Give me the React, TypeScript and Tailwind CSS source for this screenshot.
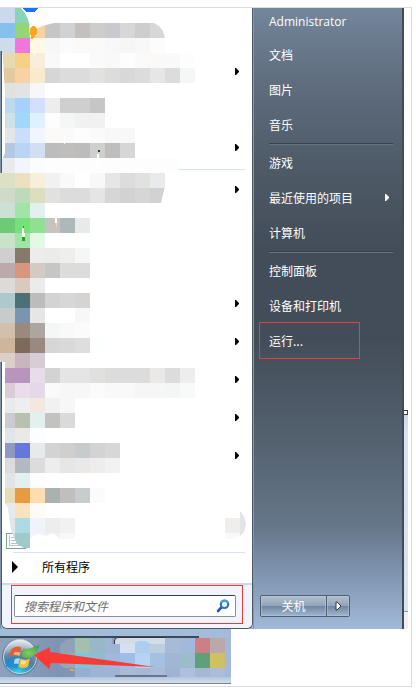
import type { ReactNode } from 'react';

const CELL = 15;

// One string per mosaic row, one colour per cell. "-" leaves a cell empty.
const MENU_MOSAIC = [
  '#ccd9ec #88d4ba',
  '#86c1ed #94d676 #f9d2a3 #c6c6c6 #d1d2d4 #c3c0be #cdcdcb #cac9ce #d7d7d7 #cdcdcb #d7d7d7',
  '#cfdaea #f076d7 #fff8e4 #f7f7f7 #fafbfb #fcfaf8 #fafafa #f8f8f8 #f4f7f6 #f8f8f8 #fcfcfc',
  '#e7d9b0 #f6d084 #f7efdc #f9f9f9 - - #fafafa #f9f9f9 #fdfdfd #fafaf9 #fbf9f7 #f9f9f9 #fdfdfd',
  '#e3cba1 #f8d2a3 #f9eacb #d6d6d6 #dcdcdc #dcdcdc #e1e1df #dcdcdc #d8d8d8 #dcdcdc #e6e6e6 #dcdcdc #f4f7f6',
  '#e1e1df #e2e3e5 #f7f7f7',
  '#bcd9ee #a5d0ff #d2dffe #ededed #cfcfcf #cfcfcf #c6c6c6',
  '#d0e1e6 #9fd7fd #dff1ff #fdfdfd #f4f7f6 #f1f1f1 #f1f1f1',
  '#e3e5e7 #c9defa #f1f5fd #fcfaf8 #fafafa #fdfdfd #fafafa #f8f8f8 #f8f8f8',
  '#b4c8e3 #b9d4f4 #d2dff2 #bcbcbc #c0bebc #bcbcbc #cfcfcd #c0bebc #d6d6d6',
  '#e8eaec #f1f5fd #fbfcfd #fdfdfd #fdfdfd #fdfdfd #fdfdfd #fdfdfd #fdfdfd #fdfdfd #fdfdfd #fdfdfd',
  '#dce0c4 #ebe0c0 #f7efdc #f1f1f1 #f9f9f9 - #f8f8f8 #e6e6e6 #dcdcdc #e1e1df #e8eaec',
  '#d0dac9 #bddabb #dbdfc0 #e1e1df #dcdcdc #dcdcdc #e5e5e5 #d6d6d6 #d2d2d2 #d6d6d6 #d2d2d2',
  '#cde0d6 #a0e5a7 #e3f0f1',
  '#6dca75 #76e07b #8fe093 #c6c3c1 #aeb8bb #e7e9eb',
  '#c8e3ca #a0e5a7 #e2f9e4',
  '#cfcfcf #877a6b #eeebec #ebebea #eeeeec #f5f7f6',
  '#bba9ab #d9957e #d3cac4 #c6c6c6 #dcdcdc #dcdcdc',
  '#dddbd7 #dacabe #ebebeb',
  '#acc9cd #4b7075 #bcbcbc #d3d3d3 #d7d7d7 #d6d3d3',
  '#c7cbcb #7b95b0 #e6e6e6 - - #f7f7f7',
  '#d2bfac #9a897f #ada59f #f5f7f6 #f9f9f9 #fbfbfb',
  '#cfb59c #7d6a5b #9a897f #d6d6d6 #d9d9d9 #dedede #fdfeff',
  '#dccfca #c9b5be #d8ccd5',
  '#b994bf #b994bf #e9dcea #d3d3d3 #e5e5e5 #e5e5e5 #e0e0de #dcdcdc #dcdcdc #dcdcdc #ebe9e7 #dcdcdc #ededed',
  '#d8ccd5 #ebdcec #e5d9e8 #fafafa #f7f7f7 #f7f7f7 #fbfbfb #f9f9f9 #f9f9f9 #f6f6f6 #f6f6f6 #f3f6f5 #f8f9f9',
  '#e7e9eb #eeeeec #f1e8df #f1f1f1 #f7f7f7',
  '#cccbd0 #b8c1b0 #e2f0ef #c4c2c0 #dadada',
  '#e2e4e7 #ebe9e7 #fbfdfe',
  '#9398c3 #6377dc #e7e9eb #d3d3d3 #cfcfcd #c7cbcb #d3d3d3 #d7d7d7',
  '#dcdcdc #b3b9c0 #dcdcdc #ededed #e6e6e6 #ebe9e7 #ededed #f2f2f2',
  '#e2e4e6 #e2f0ef #fdfdfd',
  '#e8dcb6 #e89a40 #fedeaf #abb0b1 #c1bfbd #c9cccc #fbfbfb',
  '#e7e9eb #f9e2bc #fefbf6',
  '#e2e4e6 #acdbe3 #f0f4fa #ededed #f1f1f1',
  '#d5dcdc #a0c9cb #f0f4fa #f1f1f1 #f8f8f8',
];

const TASKBAR_MOSAIC = [
  '#8fa2b8 #a3bfae #98b8c8 #9fb5d4 #d6e0f2 #afcdf0 #bccfe0 #a7bbd9 #a3b9dc #cb7f87 #baa8ab',
  '#93aaae #7bc5e0 #8fbccf #9fb8dc #9fbde6 #b6d3f5 #a5c1e2 #a1b6d5 #9cbbcb #5da07b #cfc063',
  '- #96aed0 #9db4d4 #9db4d4 #a9bbd9 #a9b8d2 #a9bbd9 #9fb3d3 #adbfde #a7b6d2 #adbcda',
];

const PROGRAM_GROUPS = [
  [false, true, false, true],
  [true, false, false, true, true, true, true, true, false, false],
];

const PLACES = [
  ['文档', '图片', '音乐'],
  ['游戏', '最近使用的项目', '计算机'],
  ['控制面板', '设备和打印机'],
];

function Cells({ rows }: { rows: string[] }) {
  return (
    <>
      {rows.map((row, y) =>
        row.split(' ').map((fill, x) =>
          fill === '-' ? null : (
            <rect key={`${x}-${y}`} x={x * CELL} y={y * CELL} width={CELL} height={CELL} fill={fill} />
          ),
        ),
      )}
    </>
  );
}

function MenuMosaic() {
  return (
    <svg
      className="pointer-events-none absolute top-0 left-0"
      width="250"
      height="542"
      viewBox="0 0 250 542"
      shapeRendering="crispEdges"
      aria-hidden="true"
    >
      <defs>
        <clipPath id="menu-smudge">
          <path d="M0 0H21L26 7L29 14L30 30L35 22L42 18L54 15H154L159 18L163 23L165 30H200V151H183L178 164H165V178L161 195H200V532L78 531L60 531L53 525L46 528L38 526L30 530V540H24L17 536L12 525L9 510L8 500L5 495V354H0V165H2V152L5 145V85L4 70L3 50L2 43H0Z" />
        </clipPath>
        <clipPath id="menu-smudge-right">
          <path d="M225 510H240V503L244 508L246 516L244 524L239 529L232 531H225Z" />
        </clipPath>
      </defs>
      <rect x="6" y="525" width="19" height="15" fill="#fff" stroke="#7ba193" />
      <path d="M9 527V537H22M11 529H18M11 532H18M11 535H18" fill="none" stroke="#b9c2c0" />
      <g clipPath="url(#menu-smudge)">
        <Cells rows={MENU_MOSAIC} />
      </g>
      <g clipPath="url(#menu-smudge-right)">
        <rect x="225" y="500" width="15" height="25" fill="#efeeec" />
        <rect x="225" y="525" width="15" height="10" fill="#f9f9f9" />
        <rect x="240" y="500" width="8" height="35" fill="#e2e4e6" />
      </g>
      <path d="M22 0H38L36 3L34 4H26Z" fill="#1a73f8" />
      <path d="M30 20L32 18H35L37 21V25L35 28L33 30V31H31V28L30 27Z" fill="#f7a823" />
      <path d="M22 220H24V225H25V233H22Z" fill="#fff" />
      <rect x="23" y="218" width="1" height="2" fill="#1f9a1f" />
      <rect x="22" y="229" width="3" height="4" fill="#1fa51f" />
      <path d="M97 146H99V161H97ZM64 127H65V136H64ZM34 44H35V47H34ZM55 210H57V215H55Z" fill="#fff" />
      <rect x="98" y="142" width="2" height="2" fill="#33403c" />
      <rect x="56" y="215" width="1" height="4" fill="#f3d5ad" />
    </svg>
  );
}

function FlyoutArrow({ className }: { className: string }) {
  return (
    <svg className={className} width="4" height="7" viewBox="0 0 4 7" aria-hidden="true">
      <path fill="currentColor" d="M0 0H1L4 3V4L1 7H0Z" />
    </svg>
  );
}

function SearchIcon() {
  return (
    <svg className="shrink-0" width="14" height="14" viewBox="0 0 14 14" fill="none" aria-hidden="true">
      <path d="M5.800 8L2 12" stroke="#2f58a8" strokeWidth="2.600" strokeLinecap="round" />
      <circle cx="8.500" cy="5.300" r="3.700" fill="#f2f9fd" stroke="#2c74ba" strokeWidth="2.200" />
      <path d="M5 4.200A3.700 3.700 0 0 1 12 4.200" stroke="#3ea0d6" strokeWidth="2" />
    </svg>
  );
}

function StartOrb() {
  return (
    <svg width="42" height="38" viewBox="0 0 42 38" aria-hidden="true">
      <defs>
        <radialGradient id="orb" cx="0.45" cy="1" r="1">
          <stop offset="0" stopColor="#3fdcf5" />
          <stop offset="0.25" stopColor="#2fa3cf" />
          <stop offset="0.5" stopColor="#4a80a6" />
          <stop offset="0.75" stopColor="#7c95aa" />
          <stop offset="1" stopColor="#b9c4cc" />
        </radialGradient>
        <radialGradient id="orb-green" cx="0.4" cy="0.6" r="0.6">
          <stop offset="0" stopColor="#86cf5c" />
          <stop offset="1" stopColor="#4aa35c" />
        </radialGradient>
        <linearGradient id="orb-shine" x1="0" y1="0" x2="0" y2="1">
          <stop offset="0" stopColor="#fff" stopOpacity="0.65" />
          <stop offset="1" stopColor="#fff" stopOpacity="0.05" />
        </linearGradient>
      </defs>
      <circle cx="19" cy="19" r="17.500" fill="url(#orb)" stroke="#64798e" />
      <circle cx="19" cy="19" r="16.500" fill="none" stroke="#cfe0ea" strokeOpacity="0.85" />
      <path d="M4 22Q12 17 18.500 20L16 31Q9 28 5 29Z" fill="#2189d3" fillOpacity="0.8" />
      <path d="M3 17A16 16 0 0 1 35 17Q19 8 3 17Z" fill="url(#orb-shine)" />
      <path d="M10 11.500Q15 7 20.500 9.500L18.500 18Q13 16 8.500 19.500Z" fill="#e0603c" />
      <path d="M13 14.500Q16 13.500 19.500 14.500L18.500 18Q16 16.500 13 17Z" fill="#f4b27c" />
      <path d="M22 10.500Q29 12 34 8L39 7L35 15L31 19Q26 21.500 20.500 18.500Z" fill="url(#orb-green)" />
      <path d="M13.500 21.500Q16 19.500 19 20.500L17.500 26Q15 25 13 26Z" fill="#a5dcf5" />
      <path d="M19.500 20.500Q24.500 23 29 20.500L27 28.500Q22 31.500 17.500 28.500Z" fill="#f5bd3a" />
      <path d="M20.500 22Q23 23.500 25.500 23L24 26.500Q21.500 27 19.500 26Z" fill="#fbe27e" />
    </svg>
  );
}

function PlaceItem({ children, className = 'h-[35px]' }: { children: ReactNode; className?: string }) {
  return (
    <li className={className}>
      <button type="button" className="flex h-full w-full items-center justify-between pr-[13px] pl-[15px] text-left">
        {children}
      </button>
    </li>
  );
}

function ProgramsPane() {
  return (
    <section className="relative min-w-0 flex-1 border-l border-[#7f92a8] bg-[#9db5d3]">
      <div className="flex h-full flex-col overflow-hidden rounded-b-md border-x border-b border-[#4c5866] bg-white">
        <div className="pt-[6px] pr-[7px] pl-[11px]">
          {PROGRAM_GROUPS.map((group, g) => (
            <ul key={g} className={g > 0 ? 'border-t border-[#d9e3ea]' : 'pb-[3px]'}>
              {group.map((hasFlyout, i) => (
                <li key={i} className="flex h-[38px] justify-end pt-4 pr-[6px]">
                  {hasFlyout && <FlyoutArrow className="text-black" />}
                </li>
              ))}
            </ul>
          ))}
          <div className="mt-[2px] border-t border-[#d3e3f2]" />
        </div>

        <button type="button" className="flex h-[30px] items-center gap-6 pb-[2px] pl-[10px] text-left text-black">
          <svg width="6" height="12" viewBox="0 0 6 12" aria-hidden="true">
            <path fill="currentColor" d="M0 0L6 6L0 12Z" />
          </svg>
          所有程序
        </button>

        <form className="border-t-2 border-[#cbd9ea] bg-[#f1f5fb] pr-[9px] pb-1 pl-[9px]">
          <div className="border border-[#f03a3a] px-[2px] pt-[9px] pb-[6px]">
            <label className="mr-1 flex h-[22px] items-center rounded-xs border border-[#8b8f94] border-t-[#3c3f43] bg-white pr-[5px] pl-[9px]">
              <input
                type="text"
                aria-label="搜索程序和文件"
                placeholder="搜索程序和文件"
                className="w-full min-w-0 flex-1 bg-transparent italic outline-none placeholder:text-[#6d6d6d]"
              />
              <SearchIcon />
            </label>
          </div>
        </form>
      </div>
      <div className="absolute top-0 -left-px">
        <MenuMosaic />
      </div>
    </section>
  );
}

function PlacesPane() {
  return (
    <nav className="flex w-[151px] shrink-0 flex-col border-r-2 border-l border-r-[#414c59] border-l-[#8797a8] bg-[linear-gradient(#74869b_0px,#606e80_70px,#505c69_150px,#434d59_240px,#434d59_330px,#53606e_430px,#66778a_520px,#8197b2_570px,#a2bad9_621px)] text-white">
      <ul>
        <PlaceItem className="h-[29px] pb-[2px]">
          <span className="font-['Open_Sans',sans-serif]">Administrator</span>
        </PlaceItem>
        {PLACES.map((group, g) => (
          <li key={g}>
            {g > 0 && <div className="mt-px mr-[9px] ml-[15px] border-t border-b border-t-[#38424d] border-b-[#65727f]" />}
            <ul>
              {group.map((name) => (
                <PlaceItem key={name}>
                  {name}
                  {name === '最近使用的项目' && <FlyoutArrow className="text-white" />}
                </PlaceItem>
              ))}
            </ul>
          </li>
        ))}
        <li className="relative h-[35px]">
          <button type="button" className="flex h-full w-full items-center pl-[15px] text-left">
            运行...
          </button>
          <div className="pointer-events-none absolute -top-px -bottom-px left-[5px] w-[101px] border border-[#f03a3a]" />
        </li>
      </ul>

      <div className="mt-auto mb-3 ml-[6px] flex h-[22px] w-[90px] rounded-xs border border-[#525f70] bg-[linear-gradient(#b3c0d0_0%,#93a4b9_48%,#74879f_52%,#9fb5d0_100%)]">
        <button type="button" className="flex-1 border-r border-[#525f70] shadow-[inset_0_0_0_1px_#b9c8da80]">
          关机
        </button>
        <button
          type="button"
          aria-label="关机选项"
          className="flex w-[22px] items-center justify-center shadow-[inset_0_0_0_1px_#b9c8da80]"
        >
          <svg width="7" height="10" viewBox="0 0 7 10" aria-hidden="true">
            <path d="M1 1H2L6 5L2 9H1Z" fill="#fff" stroke="#2f3944" />
          </svg>
        </button>
      </div>
    </nav>
  );
}

// Sliver of the window that sits behind the menu.
function WindowEdge() {
  return (
    <div className="flex w-[7px] shrink-0 flex-col pr-[3px]">
      <div className="h-[402px]" />
      <div className="-ml-px h-[5px] w-[5px] border border-[#3c434c] bg-white" />
      <div className="flex-1 bg-linear-to-b from-[#cdd8e8] to-[#dae3f1] to-10%" />
      <div className="h-[18px] border-t border-[#8f9499] bg-[#f0f0f0]" />
    </div>
  );
}

function Taskbar() {
  return (
    <footer className="relative flex h-[55px] w-9/16 flex-col overflow-hidden bg-[#a1bdda]">
      <div className="mt-[7px] mr-8 h-[2px] bg-[#3d4a58]" />
      <div className="h-[39px] bg-linear-to-r from-[#8da1bd] via-[#7f94b4] via-25% to-[#a5b9d9]" />
      <div className="flex-1 border-b border-[#7b8592] bg-linear-to-b from-[#b3c6df] to-[#d3deec]" />
      <button type="button" aria-label="开始" className="absolute top-[9px] left-px">
        <StartOrb />
      </button>
      <svg
        className="pointer-events-none absolute top-0 left-0"
        width="231"
        height="55"
        viewBox="0 0 231 55"
        aria-hidden="true"
      >
        <defs>
          <clipPath id="task-smudge">
            <path d="M60 16L66 11L75 9H112V15H134L138 12H146L150 15H165V9H225V48H172L165 46H115V48H75L73 40H66L60 36Z" />
          </clipPath>
        </defs>
        <path d="M114.500 17V12Q114.500 8.500 118 8.500H165Q168.500 8.500 168.500 12V17" fill="#d3dde8" stroke="#2d3640" />
        <path d="M170.500 9V17M173.500 9V17" stroke="#4f5d6e" />
        <g clipPath="url(#task-smudge)" shapeRendering="crispEdges">
          <g transform="translate(60 9)">
            <Cells rows={TASKBAR_MOSAIC} />
          </g>
        </g>
        <path d="M115 47H167" stroke="#384452" />
        <path d="M69 40H73L75 42H71Z" fill="#f0a63a" />
        <path d="M34 26L50 18V23L155 38L51 34L49 40Z" fill="#fb3a35" />
      </svg>
    </footer>
  );
}

export default function App() {
  return (
    <main className="bg-white pt-[7px] font-['Noto_Sans_CJK_SC',sans-serif] text-xs">
      <div className="mr-1 border-y border-r border-[#dcdcdc] pb-[2px]">
        <div className="flex">
          <ProgramsPane />
          <PlacesPane />
          <WindowEdge />
        </div>
        <Taskbar />
      </div>
    </main>
  );
}
